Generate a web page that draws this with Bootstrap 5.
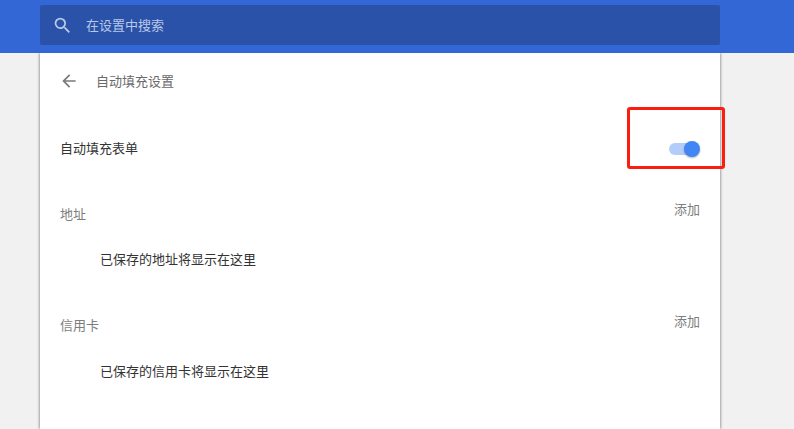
<!DOCTYPE html>
<html lang="zh">
<head>
<meta charset="utf-8">
<title>自动填充设置</title>
<link href="https://cdn.jsdelivr.net/npm/bootstrap@5.3.0/dist/css/bootstrap.min.css" rel="stylesheet">
<style>
html,body{height:429px;overflow:hidden}
body{background:#f1f1f1;font-family:"Noto Sans CJK SC","Liberation Sans",sans-serif;font-size:13px;line-height:20px;color:#333;position:relative}
.top-bar{height:53px;background:#3367d6;padding:5px 74px 0 40px;position:relative;z-index:1}
.search-box{height:40px;background:#2a52a8;border-radius:2px;padding-left:12px;gap:13px;color:#b9c8e8}
.search-box svg{width:21px;height:21px;flex:none}
.sheet{width:680px;height:376px;margin-left:40px;background:#fff;box-shadow:0 0 3px rgba(0,0,0,.6);padding:0 20px}
.sub-head{height:56px;gap:17px;color:#6a6a6a}
.sub-head svg{width:20px;height:20px;flex:none;margin-left:-1px}
.fill-row{height:78px;color:#333}
.switch-track{width:30px;height:12px;border-radius:6px;background:#b3cdfb;position:relative;margin:2px 1px 0 0}
.switch-knob{position:absolute;right:-1px;top:-2px;width:16px;height:16px;border-radius:50%;background:#4285f4;box-shadow:0 1px 2px rgba(0,0,0,.3)}
.section-head{color:#7d7d7d}
.head-one{height:47px;padding-top:17px}
.head-two{height:56px;padding-top:25px}
.add-link{color:#7d7d7d;margin-top:-5px}
.head-two .add-link{margin-top:-4px}
.empty-note{height:56px;padding-left:40px;padding-top:15px;color:#333}
.red-frame{position:absolute;z-index:2;left:627px;top:107px;width:98px;height:62px;border:3px solid #fb1d10;border-radius:3px;pointer-events:none}
</style>
</head>
<body>
<div class="top-bar">
  <div class="search-box d-flex align-items-center">
    <svg viewBox="0 0 24 24" fill="#b9c8e8"><path d="M15.5 14h-.79l-.28-.27A6.47 6.47 0 0 0 16 9.5 6.5 6.5 0 1 0 9.5 16c1.61 0 3.09-.59 4.23-1.57l.27.28v.79l5 4.99L20.49 19l-4.99-5zm-6 0C7.01 14 5 11.99 5 9.5S7.01 5 9.5 5 14 7.01 14 9.5 11.99 14 9.5 14z"/></svg>
    <span>在设置中搜索</span>
  </div>
</div>
<div class="sheet">
  <div class="sub-head d-flex align-items-center">
    <svg viewBox="0 0 24 24" fill="#7a7a7a"><path d="M20 11H7.83l5.59-5.59L12 4l-8 8 8 8 1.41-1.41L7.83 13H20v-2z"/></svg>
    <span>自动填充设置</span>
  </div>
  <div class="fill-row d-flex justify-content-between align-items-center">
    <span>自动填充表单</span>
    <div class="switch-track"><div class="switch-knob"></div></div>
  </div>
  <div class="section-head head-one d-flex justify-content-between align-items-start">
    <span>地址</span><span class="add-link">添加</span>
  </div>
  <div class="empty-note">已保存的地址将显示在这里</div>
  <div class="section-head head-two d-flex justify-content-between align-items-start">
    <span>信用卡</span><span class="add-link">添加</span>
  </div>
  <div class="empty-note">已保存的信用卡将显示在这里</div>
</div>
<div class="red-frame"></div>
<script src="https://cdn.jsdelivr.net/npm/bootstrap@5.3.0/dist/js/bootstrap.bundle.min.js"></script>
</body>
</html>
